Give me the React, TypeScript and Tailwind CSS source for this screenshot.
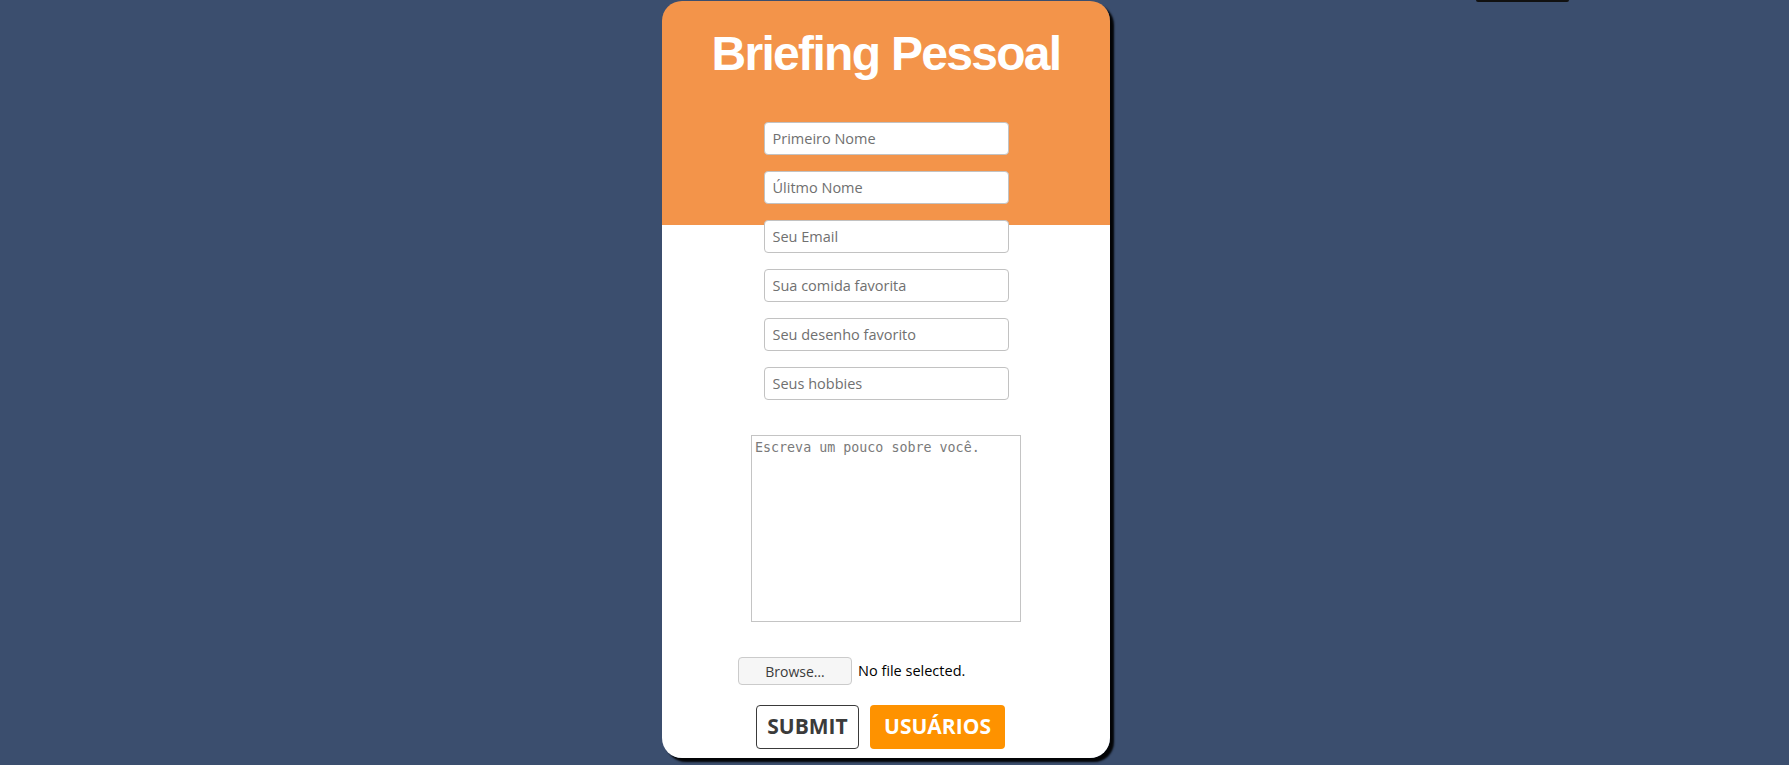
const fields = [
  "Primeiro Nome",
  "Úlitmo Nome",
  "Seu Email",
  "Sua comida favorita",
  "Seu desenho favorito",
  "Seus hobbies",
];

const App = () => {
  return (
    <div className="relative min-h-[765px] w-full bg-[#3b4e6e] pt-px pl-[662px] font-['Open_Sans',sans-serif]">
      <div className="absolute top-0 left-[1476px] h-[2px] w-[93px] rounded-b-[3px] bg-[#111]" />

      <div className="flex h-[757px] w-[448px] flex-col rounded-[20px] bg-[linear-gradient(to_bottom,#f3944a_224px,#ffffff_224px)] shadow-[4px_4px_2px_rgba(0,0,0,0.95)]">
        <h1 className="mt-[29px] text-center font-['Liberation_Sans',Arial,sans-serif] text-[48px] leading-none font-bold tracking-[-1.7px] text-white">
          Briefing Pessoal
        </h1>

        <form className="flex flex-col">
          <div className="mt-[44px] flex flex-col items-center gap-4">
            {fields.map((label) => (
              <input
                key={label}
                type="text"
                placeholder={label}
                className="h-[33px] w-[245px] rounded-[4px] border border-[#c2c2c2] bg-white px-[8px] text-[14.5px] text-[#333] placeholder:text-[#707070] outline-none"
              />
            ))}
          </div>

          <textarea
            placeholder="Escreva um pouco sobre você."
            className="mx-auto mt-[35px] h-[187px] w-[270px] resize-none border border-[#c4c4c4] bg-white px-[3px] py-[4px] font-['DejaVu_Sans_Mono',monospace] text-[13.33px] leading-[15px] text-[#333] placeholder:text-[#7a7a7a] outline-none"
          />

          <div className="mt-[35px] flex items-center gap-[6px] pl-[76px]">
            <button
              type="button"
              className="h-[28px] w-[114px] rounded-[4px] border border-[#cbcbcb] bg-[#f6f6f6] text-[14px] text-[#3c3c3c]"
            >
              Browse…
            </button>
            <span className="text-[14.5px] text-black">No file selected.</span>
          </div>

          <div className="mt-[20px] flex justify-center gap-[11px] pr-[11px]">
            <button
              type="submit"
              className="h-[44px] w-[103px] rounded-[4px] border border-[#3a3a3a] bg-white text-[21px] font-bold text-[#3b3b3b]"
            >
              SUBMIT
            </button>
            <button
              type="button"
              className="h-[44px] w-[135px] rounded-[4px] bg-[#fe9200] text-[21px] font-bold text-white"
            >
              USUÁRIOS
            </button>
          </div>
        </form>
      </div>
    </div>
  );
};

export default App;
